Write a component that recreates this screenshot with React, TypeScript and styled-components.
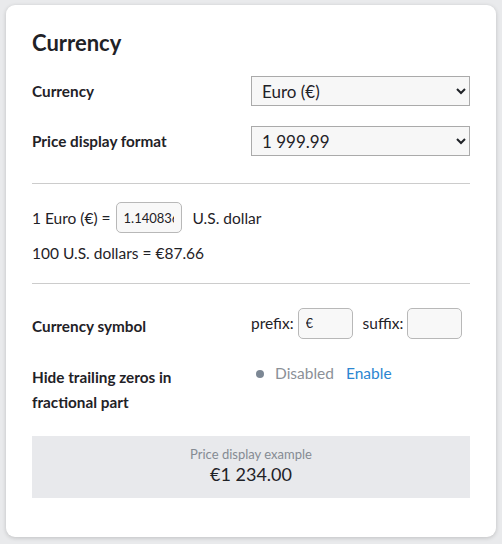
import styled, { createGlobalStyle } from 'styled-components'

const GlobalStyle = createGlobalStyle`
  html, body {
    margin: 0;
    padding: 0;
    background: #e9eaec;
    font-family: Lato, "Open Sans", sans-serif;
    color: #1f2227;
  }
`

const Page = styled.div`
  padding: 5px 6px 7px 6px;
`

const Card = styled.div`
  background: #ffffff;
  border-radius: 9px;
  box-shadow: 0 1px 4px rgba(0, 0, 0, 0.18);
  padding: 24px 26px 40px 26px;
  height: 532px;
  box-sizing: border-box;
`

const Title = styled.h2`
  margin: 0 0 19px 0;
  font-size: 22px;
  font-weight: 700;
  line-height: 28px;
`

const Row = styled.div<{ $gap?: number }>`
  display: grid;
  grid-template-columns: 1fr 1fr;
  align-items: center;
  margin-bottom: ${p => p.$gap ?? 20}px;
`

const Label = styled.div`
  font-size: 15.3px;
  font-weight: 700;
  line-height: 25px;
`

const Select = styled.select`
  height: 30px;
  width: 100%;
  font-family: Lato, sans-serif;
  font-size: 17px;
  color: #1f2227;
  background: #f7f7f7;
  border: 1px solid #aaaaaa;
  border-radius: 0;
  padding: 0 6px;
`

const Divider = styled.hr<{ $top: number; $bottom: number }>`
  border: none;
  border-top: 1px solid #cccccc;
  margin: ${p => p.$top}px 0 ${p => p.$bottom}px 0;
`

const Line = styled.div`
  display: flex;
  align-items: center;
  font-size: 15.5px;
  line-height: 20px;
  gap: 4px;
  margin-bottom: 10px;
`

const Input = styled.input<{ $w: number }>`
  width: ${p => p.$w}px;
  height: 31px;
  box-sizing: border-box;
  background: #f8f8f8;
  border: 1px solid #b8b8b8;
  border-radius: 5px;
  padding: 0 7px;
  font-family: Lato, sans-serif;
  font-size: 13px;
  color: #1f2227;
`

const RateInput = styled(Input)`
  margin-left: 1px;
  margin-right: 7px;
`

const SymbolControls = styled.div`
  display: flex;
  align-items: center;
  gap: 4px;
  font-size: 15.5px;
  margin-top: -7px;
`

const SuffixLabel = styled.span`
  margin-left: 6px;
`

const Status = styled.div`
  display: flex;
  align-items: center;
  align-self: start;
  font-size: 15.5px;
  line-height: 25px;
  padding-left: 5px;
  margin-top: -4px;
`

const Dot = styled.span`
  width: 8px;
  height: 8px;
  border-radius: 50%;
  background: #7c8794;
  margin-right: 11px;
`

const Muted = styled.span`
  color: #8b9097;
`

const LinkText = styled.a`
  color: #2b86d1;
  margin-left: 12px;
  text-decoration: none;
  cursor: pointer;
`

const Example = styled.div`
  background: #e8e9ec;
  margin-top: 21px;
  padding: 10px 0 12px 0;
  text-align: center;
`

const ExampleCaption = styled.div`
  font-size: 13px;
  color: #858b93;
  line-height: 16px;
`

const ExamplePrice = styled.div`
  font-size: 18px;
  line-height: 24px;
  color: #1f2227;
`

export default function App() {
  return (
    <>
      <GlobalStyle />
      <Page>
        <Card>
          <Title>Currency</Title>
          <Row>
            <Label>Currency</Label>
            <Select defaultValue="eur">
              <option value="eur">Euro (€)</option>
              <option value="usd">U.S. dollar ($)</option>
            </Select>
          </Row>
          <Row $gap={0}>
            <Label>Price display format</Label>
            <Select defaultValue="space">
              <option value="space">1 999.99</option>
              <option value="comma">1,999.99</option>
            </Select>
          </Row>
          <Divider $top={27} $bottom={18} />
          <Line>
            1 Euro (€) =
            <RateInput $w={66} defaultValue="1.1408365" />
            U.S. dollar
          </Line>
          <Line>100 U.S. dollars = €87.66</Line>
          <Divider $top={20} $bottom={30} />
          <Row $gap={26}>
            <Label>Currency symbol</Label>
            <SymbolControls>
              prefix:
              <Input $w={55} defaultValue="€" />
              <SuffixLabel>suffix:</SuffixLabel>
              <Input $w={55} defaultValue="" />
            </SymbolControls>
          </Row>
          <Row $gap={0}>
            <Label>
              Hide trailing zeros in
              <br />
              fractional part
            </Label>
            <Status>
              <Dot />
              <Muted>Disabled</Muted>
              <LinkText>Enable</LinkText>
            </Status>
          </Row>
          <Example>
            <ExampleCaption>Price display example</ExampleCaption>
            <ExamplePrice>€1 234.00</ExamplePrice>
          </Example>
        </Card>
      </Page>
    </>
  )
}
